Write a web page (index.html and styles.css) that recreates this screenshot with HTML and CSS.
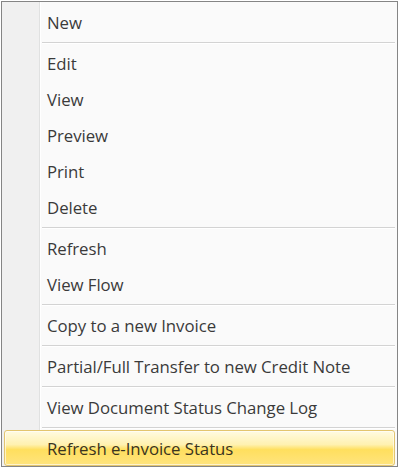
FILE: index.html
```html
<!DOCTYPE html>
<html lang="en">
<head>
    <meta charset="UTF-8">
    <meta name="viewport" content="width=device-width, initial-scale=1.0">
    <title>Context Menu</title>
    <link rel="stylesheet" href="styles.css">
</head>
<body>
    <!-- Document context menu -->
    <ul class="menu">
        <li class="item">New</li>
        <li class="sep"></li>
        <li class="item">Edit</li>
        <li class="item">View</li>
        <li class="item">Preview</li>
        <li class="item">Print</li>
        <li class="item">Delete</li>
        <li class="sep"></li>
        <li class="item">Refresh</li>
        <li class="item">View Flow</li>
        <li class="sep"></li>
        <li class="item">Copy to a new Invoice</li>
        <li class="sep"></li>
        <li class="item">Partial/Full Transfer to new Credit Note</li>
        <li class="sep"></li>
        <li class="item">View Document Status Change Log</li>
        <li class="sep"></li>
        <li class="item active">Refresh e-Invoice Status</li>
    </ul>
</body>
</html>
```

FILE: styles.css
```css
/* Page */
body {
    margin: 0;
    padding: 0;
    background: #ffffff;
    font-family: 'Open Sans', 'Noto Sans', sans-serif;
}

/* Menu Box */
.menu {
    list-style: none;
    box-sizing: border-box;
    width: 397px;
    margin: 1px 0 0 1px;
    padding: 2px 2px 0 2px;
    border: 1px solid #858585;
    background: linear-gradient(to right, #f0f0f0 0 37px, #e0e1e1 37px 38px, #ffffff 38px 39px, #fafafa 39px);
}

/* Menu Rows */
.item {
    box-sizing: border-box;
    height: 36px;
    padding-top: 1px;
    line-height: 35px;
    padding-left: 43px;
    font-size: 16.8px;
    letter-spacing: -0.05px;
    color: #3a3a3a;
    white-space: nowrap;
}

.sep {
    height: 5px;
    margin-left: 38px;
    background: linear-gradient(to bottom, transparent 0 2px, #d3d3d3 2px 3px, #ffffff 3px 4px, transparent 4px);
}

/* Highlighted Row */
.item.active {
    line-height: 33px;
    padding-left: 42px;
    border: 1px solid #e3c56e;
    border-radius: 3px;
    background: linear-gradient(to bottom, #fffbe2, #fff1b0 40%, #ffdf5e 55%, #ffe47e);
    box-shadow: inset 0 0 0 1px rgba(255, 255, 255, 0.6);
    color: #3a3420;
}
```
